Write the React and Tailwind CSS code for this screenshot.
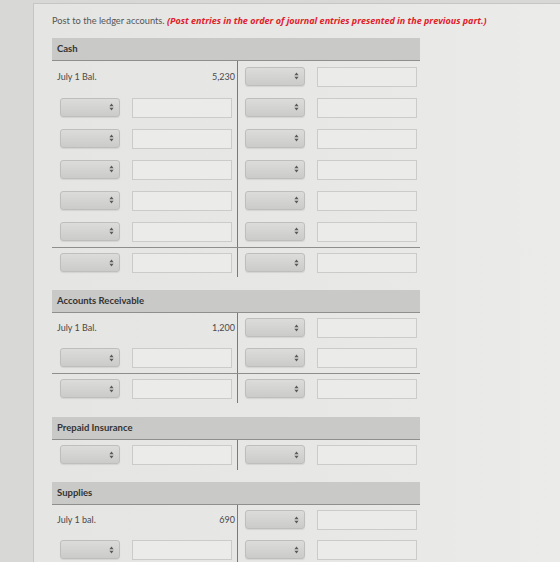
import React from "react";

const Arrows = () => (
  <svg width="5" height="8" viewBox="0 0 5 8">
    <path d="M2.5 0.6L4.6 3.2H0.4Z M2.5 7.4L4.6 4.8H0.4Z" fill="#5a5a5a" />
  </svg>
);

const Sel = () => (
  <div className="w-[60px] h-[19px] shrink-0 rounded-[3px] border border-[#bebebc] bg-gradient-to-b from-[#dcdcda] to-[#cbcbc9] shadow-[0_1px_1px_rgba(0,0,0,0.08)] flex items-center justify-end pr-[5px]">
    <Arrows />
  </div>
);

const Inp = () => (
  <div className="w-[100px] h-[20px] shrink-0 border border-[#cbcbc9] bg-[#ebebe9]" />
);

function Row({ label, amount, h = "h-[31px]", last = false, line = false }) {
  const align = last ? "items-start pt-[5px]" : "items-center";
  return (
    <div className={`flex ${h} ${line ? "border-t border-[#8e8e8c]" : ""}`}>
      <div className={`w-[185px] shrink-0 flex ${align}`}>
        {label ? (
          <div className="flex w-full justify-between pl-[5px] pr-[2px] text-[9px] text-[#4a4a4a]">
            <span>{label}</span>
            <span>{amount}</span>
          </div>
        ) : (
          <div className="flex gap-[12px] pl-[8px]">
            <Sel />
            <Inp />
          </div>
        )}
      </div>
      <div className={`flex-1 border-l border-[#7a7a78] flex ${align}`}>
        <div className="flex gap-[12px] pl-[7px]">
          <Sel />
          <Inp />
        </div>
      </div>
    </div>
  );
}

const Header = ({ title }) => (
  <div className="h-[23px] bg-[#c9c9c7] border-b border-[#8f8f8d] flex items-center pl-[5px] text-[9.5px] font-bold text-[#333]">
    {title}
  </div>
);

export default function App() {
  return (
    <div
      className="w-[560px] h-[562px] overflow-hidden bg-[#d8d8d6]"
      style={{ fontFamily: "Lato, 'Open Sans', sans-serif" }}
    >
      <div className="ml-[33px] mt-[3px] h-[600px] border-l border-t border-[#c6c6c4] bg-gradient-to-r from-[#e5e5e3] via-[#e7e7e5] to-[#ebebe9] pl-[18px] pt-[11px]">
        <div className="text-[9.25px] leading-[12px] text-[#555] whitespace-nowrap">
          Post to the ledger accounts.{" "}
          <span
            className="font-bold italic text-[#e0202a] text-[9px]"
            style={{ fontFamily: "'Open Sans', sans-serif" }}
          >
            (Post entries in the order of journal entries presented in the previous part.)
          </span>
        </div>

        <div className="w-[368px]">
          {/* Cash */}
          <div className="mt-[11px]">
            <Header title="Cash" />
            <Row label="July 1 Bal." amount="5,230" />
            <Row />
            <Row />
            <Row />
            <Row />
            <Row />
            <Row line last h="h-[30px]" />
          </div>

          {/* Accounts Receivable */}
          <div className="mt-[13px]">
            <Header title="Accounts Receivable" />
            <Row label="July 1 Bal." amount="1,200" h="h-[30px]" />
            <Row h="h-[30px]" />
            <Row line last h="h-[30px]" />
          </div>

          {/* Prepaid Insurance */}
          <div className="mt-[14px]">
            <Header title="Prepaid Insurance" />
            <Row last h="h-[30px]" />
          </div>

          {/* Supplies */}
          <div className="mt-[12px]">
            <Header title="Supplies" />
            <Row label="July 1 bal." amount="690" h="h-[30px]" />
            <Row h="h-[30px]" />
            <Row h="h-[30px]" />
          </div>
        </div>
      </div>
    </div>
  );
}
